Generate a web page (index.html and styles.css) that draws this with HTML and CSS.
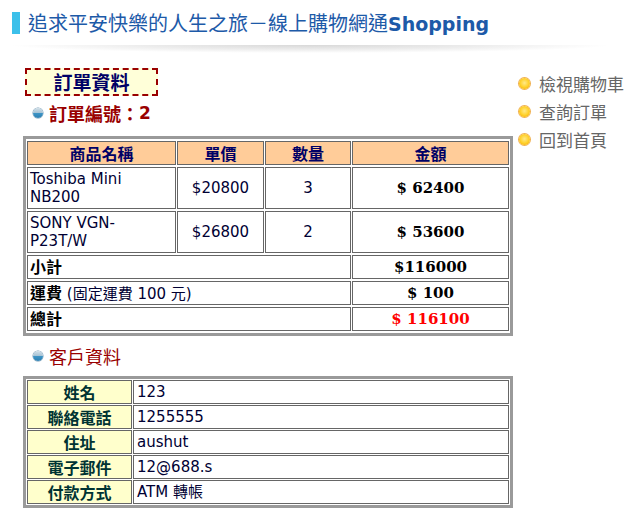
FILE: index.html
```html
<!DOCTYPE html>
<html lang="zh-Hant">
<head>
<meta charset="utf-8">
<title>訂單資料</title>
<link rel="stylesheet" href="styles.css">
</head>
<body>
<div class="header">
  <div class="title">追求平安快樂的人生之旅－線上購物網通<b>Shopping</b></div>
  <div class="shadow"></div>
</div>
<div class="page">
  <div class="main">
    <div class="boxtitle">訂單資料</div>
    <div class="subhead bold"><span class="ball"></span>訂單編號：<span class="num">2</span></div>
    <table class="order">
      <colgroup><col class="c1"><col class="c2"><col class="c3"><col class="c4"></colgroup>
      <tr><th>商品名稱</th><th>單價</th><th>數量</th><th>金額</th></tr>
      <tr class="item"><td class="name">Toshiba Mini NB200</td><td class="ctr">$20800</td><td class="ctr">3</td><td class="amt">$ 62400</td></tr>
      <tr class="item"><td class="name">SONY VGN-P23T/W</td><td class="ctr">$26800</td><td class="ctr">2</td><td class="amt">$ 53600</td></tr>
      <tr class="sum"><td colspan="3"><b>小計</b></td><td class="amt">$116000</td></tr>
      <tr class="sum"><td colspan="3"><b>運費</b> (固定運費 100 元)</td><td class="amt">$ 100</td></tr>
      <tr class="sum"><td colspan="3"><b>總計</b></td><td class="amt red">$ 116100</td></tr>
    </table>
    <div class="subhead cust"><span class="ball"></span>客戶資料</div>
    <table class="customer">
      <colgroup><col class="l"><col class="v"></colgroup>
      <tr><th>姓名</th><td>123</td></tr>
      <tr><th>聯絡電話</th><td>1255555</td></tr>
      <tr><th>住址</th><td>aushut</td></tr>
      <tr><th>電子郵件</th><td>12@688.s</td></tr>
      <tr><th>付款方式</th><td>ATM 轉帳</td></tr>
    </table>
  </div>
  <ul class="menu">
    <li><span class="yball"></span>檢視購物車</li>
    <li><span class="yball"></span>查詢訂單</li>
    <li><span class="yball"></span>回到首頁</li>
  </ul>
</div>
</body>
</html>
```
FILE: styles.css
```css
* { box-sizing: border-box; }
body {
  margin: 0;
  background: #fff;
  font-family: "DejaVu Sans", "Noto Sans CJK TC", sans-serif;
  color: #000033;
}
.header { padding-top: 12px; }
.title {
  margin-left: 12px;
  border-left: 8px solid #3cc0ea;
  padding-left: 8px;
  height: 22px;
  line-height: 22px;
  font-size: 20px;
  color: #1d5aa8;
  font-family: "Noto Sans CJK TC", sans-serif;
}
.title b {
  font-family: "DejaVu Sans", sans-serif;
  font-weight: bold;
  font-size: 19px;
}
.shadow {
  margin: 11px 0 0 10px;
  width: 600px;
  height: 8px;
  background: radial-gradient(ellipse 50% 100% at 50% 0%, #d8d8d8 0%, rgba(228,228,228,0.7) 55%, rgba(255,255,255,0) 100%);
}
.page {
  display: flex;
  align-items: flex-start;
  margin-top: 15px;
}
.main {
  margin-left: 23px;
  width: 490px;
}
.boxtitle {
  margin-left: 2px;
  width: 133px;
  height: 28px;
  border: 2px dashed #990000;
  background: #ffffd9;
  color: #000066;
  text-align: center;
  font-family: "Noto Sans CJK TC", sans-serif;
  font-size: 19px;
  font-weight: bold;
  line-height: 23px;
}
.subhead {
  display: flex;
  align-items: center;
  margin: 4px 0 0 10px;
  height: 26px;
  color: #990000;
  font-family: "Noto Sans CJK TC", sans-serif;
  font-size: 18px;
}
.subhead.bold { font-weight: bold; }
.subhead .num { font-family: "DejaVu Sans", sans-serif; font-weight: bold; font-size: 17px; }
.ball {
  width: 10px;
  height: 10px;
  border-radius: 50%;
  margin-right: 6px;
  background: linear-gradient(#d3e0e8 0%, #a8c4d6 45%, #3d93c4 55%, #2a7fb3 100%);
  box-shadow: 0 0 0 0.5px #6b94b0;
}
table {
  border: 3px solid #9a9a9a;
  width: 490px;
  table-layout: fixed;
}
th, td {
  border: 1px solid #666;
}
.order {
  margin-top: 10px;
  border-spacing: 1px 2px;
}
.order .c1 { width: 149px; }
.order .c2 { width: 87px; }
.order .c3 { width: 86px; }
.order th {
  background: #ffcc99;
  color: #000066;
  font-family: "Noto Sans CJK TC", sans-serif;
  font-size: 16px;
  font-weight: bold;
  line-height: 20px;
  height: 24px;
  padding: 0 1px;
}
.order td {
  font-size: 15px;
  line-height: 18px;
  padding: 2px;
}
.order td.name { padding-right: 8px; }
.order .ctr { text-align: center; }
.order .amt {
  text-align: center;
  font-family: "DejaVu Serif", serif;
  font-weight: bold;
  font-size: 15px;
  color: #000;
}
.order .sum td { padding: 0 2px; line-height: 18px; height: 24px; }
.order .sum b { font-family: "Noto Sans CJK TC", sans-serif; font-size: 16px; line-height: 1; color: #000; }
.order .amt.red { color: #ff0000; }
.subhead.cust { margin-top: 7px; }
.customer {
  margin-top: 7px;
  border-spacing: 1px;
}
.customer .l { width: 105px; }
.customer th {
  background: #ffffcc;
  color: #003333;
  font-family: "Noto Sans CJK TC", sans-serif;
  font-size: 16px;
  font-weight: bold;
  line-height: 20px;
  height: 24px;
  padding: 0 1px;
}
.customer td {
  font-size: 15px;
  line-height: 20px;
  height: 24px;
  padding: 0 3px;
}
.menu {
  list-style: none;
  margin: 1px 0 0 6px;
  padding: 0;
}
.menu li {
  display: flex;
  align-items: center;
  height: 28px;
  color: #666;
  font-family: "Noto Sans CJK TC", sans-serif;
  font-size: 17px;
}
.yball {
  width: 11px;
  height: 11px;
  border-radius: 50%;
  margin-right: 9px;
  background: radial-gradient(circle at 50% 45%, #ffe98a 0%, #ffd22e 50%, #f3a400 100%);
  box-shadow: 0 0 0 1px #f0b050;
}
```
